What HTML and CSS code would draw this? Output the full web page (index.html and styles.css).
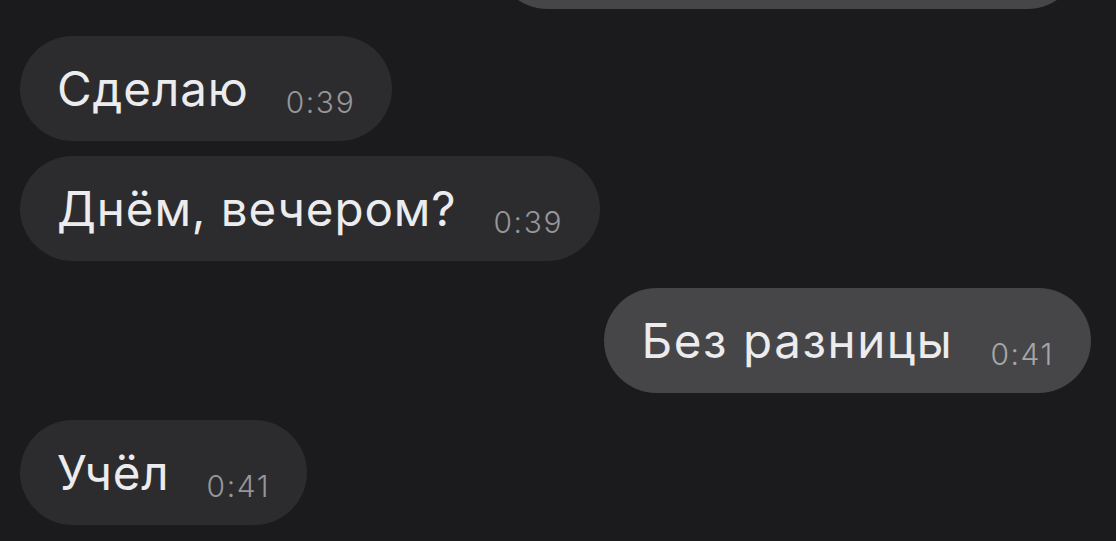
FILE: index.html
```html
<!DOCTYPE html>
<html lang="ru">
<head>
  <meta charset="UTF-8">
  <meta name="viewport" content="width=device-width, initial-scale=1.0">
  <title>Чат</title>
  <link rel="stylesheet" href="styles.css">
</head>
<body>

<div class="chat">
  <!-- предыдущее сообщение, видна только нижняя часть -->
  <div class="message outgoing previous">
    <div class="bubble bubble-cut"></div>
  </div>

  <div class="message incoming">
    <div class="bubble">
      <span class="text">Сделаю</span>
      <span class="time">0:39</span>
    </div>
  </div>

  <div class="message incoming tight">
    <div class="bubble">
      <span class="text">Днём, вечером?</span>
      <span class="time">0:39</span>
    </div>
  </div>

  <div class="message outgoing">
    <div class="bubble">
      <span class="text">Без разницы</span>
      <span class="time">0:41</span>
    </div>
  </div>

  <div class="message incoming">
    <div class="bubble">
      <span class="text">Учёл</span>
      <span class="time">0:41</span>
    </div>
  </div>
</div>

</body>
</html>
```

FILE: styles.css
```css
body {
  margin: 0;
  background-color: #1b1b1d;
  font-family: 'Inter', 'Noto Sans', sans-serif;
  overflow: hidden;
}

.chat {
  display: flex;
  flex-direction: column;
  padding: 0 25px 0 20px;
  margin-top: -96px;
}

.message {
  display: flex;
  margin-top: 27px;
}

.message.previous {
  margin-top: 0;
}

.message.tight {
  margin-top: 15px;
}

.message.outgoing {
  justify-content: flex-end;
}

.bubble {
  display: flex;
  align-items: center;
  height: 105px;
  box-sizing: border-box;
  padding: 0 37px;
  gap: 37px;
  border-radius: 53px;
  background-color: #2c2c2e;
}

.outgoing .bubble {
  background-color: #464648;
}

.bubble-cut {
  width: 585px;
  margin-right: 11px;
}

.text {
  font-size: 47.5px;
  font-weight: 370;
  color: #ececee;
  letter-spacing: 0.9px;
}

.outgoing .text {
  letter-spacing: 1.6px;
}

.time {
  font-size: 30px;
  font-weight: 360;
  color: #96969b;
  margin-top: 26px;
  letter-spacing: 1.6px;
}

.outgoing .time {
  color: #a6a6aa;
}
```
